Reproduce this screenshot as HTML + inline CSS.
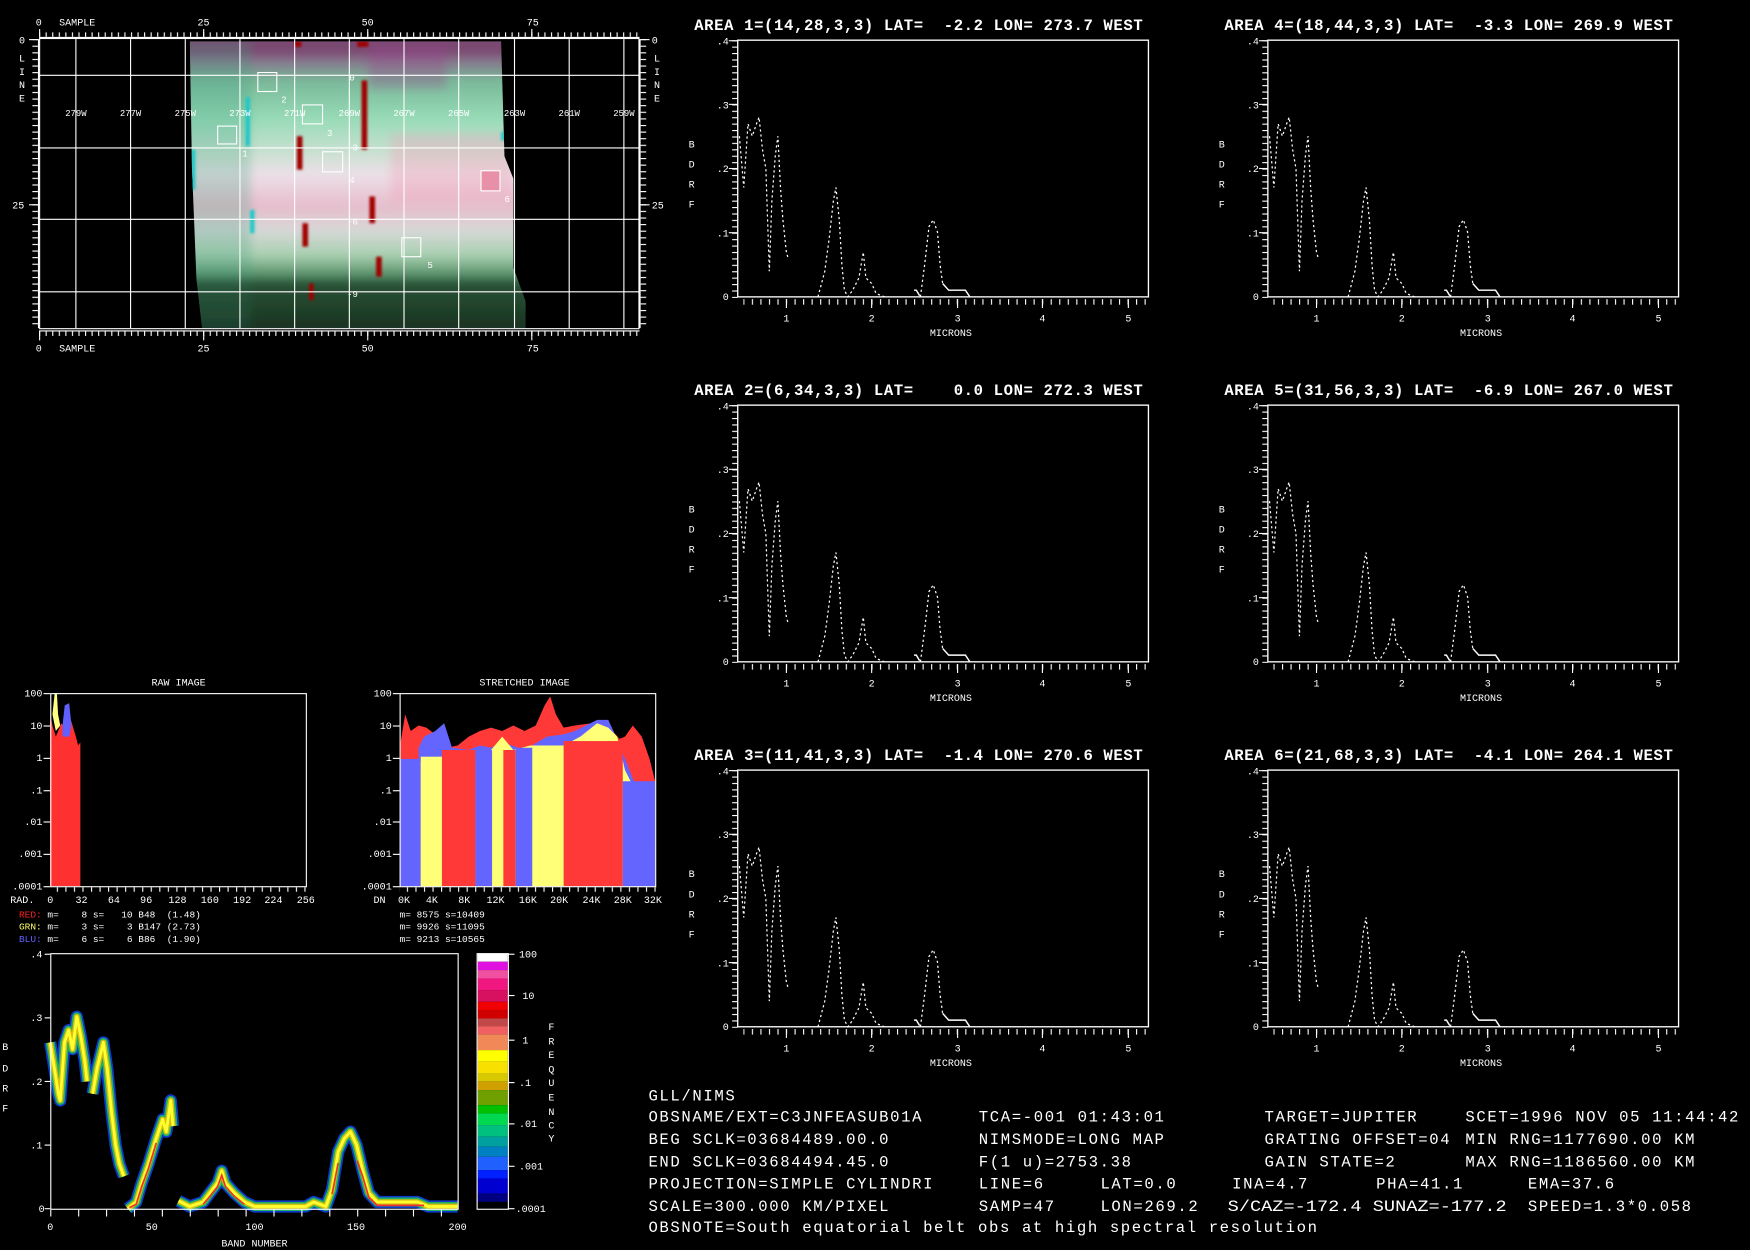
<!DOCTYPE html>
<html><head><meta charset="utf-8"><style>
html,body{margin:0;padding:0;background:#000;width:1750px;height:1250px;overflow:hidden}
svg{display:block}
text{font-family:"Liberation Mono",monospace;fill:#fff}
.s{font-size:9px}
.t{font-size:14px;font-weight:bold;letter-spacing:0.55px}
.i{font-size:14px;letter-spacing:1.45px}
</style></head><body>
<svg width="1750" height="1250" viewBox="0 0 1568 1120" preserveAspectRatio="none" xmlns="http://www.w3.org/2000/svg">
<defs>
<linearGradient id="img" x1="0" y1="0" x2="0" y2="1">
<stop offset="0" stop-color="#6e4a68"/><stop offset=".1" stop-color="#8a6088"/>
<stop offset=".18" stop-color="#78b898"/><stop offset=".3" stop-color="#98dcb8"/>
<stop offset=".4" stop-color="#c8e0d0"/><stop offset=".47" stop-color="#ece0e8"/>
<stop offset=".57" stop-color="#e6bccb"/><stop offset=".64" stop-color="#d8d8d8"/>
<stop offset=".72" stop-color="#a8d0b0"/><stop offset=".8" stop-color="#3c7a52"/>
<stop offset=".9" stop-color="#285838"/><stop offset="1" stop-color="#182020"/>
</linearGradient>
<filter id="bl" x="-5%" y="-5%" width="110%" height="110%"><feGaussianBlur stdDeviation="4"/></filter>
<filter id="bl2"><feGaussianBlur stdDeviation="1.2"/></filter>
<pattern id="tx" width="5.88" height="10" patternUnits="userSpaceOnUse" x="35"><line x1="0.5" y1="0" x2="0.5" y2="10" stroke="#fff" stroke-width="1"/></pattern>
<pattern id="ty" width="10" height="5.92" patternUnits="userSpaceOnUse" y="35"><line x1="0" y1="0.5" x2="10" y2="0.5" stroke="#fff" stroke-width="1"/></pattern>
<pattern id="sx" width="7.65" height="10" patternUnits="userSpaceOnUse" x="5"><line x1="0.5" y1="0" x2="0.5" y2="10" stroke="#fff"/></pattern>
<pattern id="sy" width="10" height="5.75" patternUnits="userSpaceOnUse" y="0"><line x1="0" y1="0.5" x2="10" y2="0.5" stroke="#fff"/></pattern>
<g id="panel">
<rect x="0" y="0" width="368" height="230" fill="none" stroke="#fff" stroke-width="1.2"/>
<rect x="-5" y="0" width="5" height="231" fill="url(#sy)"/>
<rect x="5" y="232" width="363" height="5" fill="url(#sx)"/>
<g stroke="#fff"><line x1="43.6" y1="232" x2="43.6" y2="240"/><line x1="120" y1="232" x2="120" y2="240"/><line x1="197" y1="232" x2="197" y2="240"/><line x1="273" y1="232" x2="273" y2="240"/><line x1="350" y1="232" x2="350" y2="240"/>
<line x1="-8" y1="0.5" x2="0" y2="0.5"/><line x1="-8" y1="57.5" x2="0" y2="57.5"/><line x1="-8" y1="115" x2="0" y2="115"/><line x1="-8" y1="172.5" x2="0" y2="172.5"/></g>
<g class="s" text-anchor="end"><text x="-8" y="4">.4</text><text x="-8" y="61">.3</text><text x="-8" y="118">.2</text><text x="-8" y="176">.1</text><text x="-8" y="233">0</text></g>
<g class="s"><text x="-44" y="96">B</text><text x="-44" y="114">D</text><text x="-44" y="132">R</text><text x="-44" y="150">F</text></g>
<g class="s" text-anchor="middle"><text x="43.6" y="252">1</text><text x="120" y="252">2</text><text x="197" y="252">3</text><text x="273" y="252">4</text><text x="350" y="252">5</text><text x="191" y="265">MICRONS</text></g>
<g fill="none" stroke="#fff" stroke-width="1.1" stroke-dasharray="2 2.5">
<polyline points="1.5,86 5.4,132 9.2,75 13,86 16.8,75 19.1,69 22.2,98 25.2,115 28.3,207 30.6,144 33.7,103 36,86 38.3,132 40.5,161 43.6,190 45.1,195"/>
<polyline points="71.9,230 78,207 81.9,178 85.7,144 88,132 91,161 93.3,201 95.6,224 98.7,230 103,224 108.6,213 112.5,190 114.8,213 120,218 124,227 131.6,230"/>
<polyline points="163.7,230 167.5,201 171.4,167 175.2,161 179,172 181.3,201 183.6,218"/>
</g>
<polyline points="158,224 160,224 163,229" fill="none" stroke="#fff" stroke-width="1.3"/>
<polyline points="183.6,218 189,224 204,224 208,230" fill="none" stroke="#fff" stroke-width="1.3"/>
</g>
<clipPath id="imgclip"><polygon points="170,37 449,37 452,140 460,160 460,240 471,270 471,294 181,294 176,250 172,150"/></clipPath>
</defs>
<rect width="1568" height="1120" fill="#000"/>

<!-- MAP -->
<g clip-path="url(#imgclip)">
<g filter="url(#bl)">
<rect x="150" y="20" width="340" height="290" fill="url(#img)"/>
<rect x="150" y="20" width="340" height="30" fill="#7a4a72"/>
<rect x="165" y="37" width="60" height="258" fill="#40a080" opacity=".25"/>
<rect x="350" y="120" width="110" height="60" fill="#f0a0b8" opacity=".35"/>
<rect x="330" y="40" width="70" height="40" fill="#a04090" opacity=".3"/>
<rect x="165" y="250" width="310" height="45" fill="#101810" opacity=".4"/>
</g>
<g fill="#a00000" filter="url(#bl2)"><rect x="324" y="72" width="5" height="62"/><rect x="266" y="122" width="5" height="30"/><rect x="331" y="176" width="5" height="24"/><rect x="271" y="200" width="5" height="21"/><rect x="337" y="230" width="5" height="18"/><rect x="277" y="254" width="4" height="15"/><rect x="264" y="37" width="6" height="5"/><rect x="320" y="37" width="10" height="5"/></g>
<g fill="#20c8c8" filter="url(#bl2)"><rect x="220" y="87" width="4" height="44"/><rect x="171" y="134" width="4" height="36"/><rect x="224" y="188" width="4" height="21"/><rect x="449" y="118" width="4" height="8"/></g>
</g>
<g stroke="#fff" stroke-width="1" fill="none">
<rect x="35.5" y="34.5" width="537" height="260"/>
<line x1="68" y1="35" x2="68" y2="294"/><line x1="117" y1="35" x2="117" y2="294"/><line x1="166" y1="35" x2="166" y2="294"/><line x1="215" y1="35" x2="215" y2="294"/><line x1="264" y1="35" x2="264" y2="294"/><line x1="313" y1="35" x2="313" y2="294"/><line x1="362" y1="35" x2="362" y2="294"/><line x1="411" y1="35" x2="411" y2="294"/><line x1="461" y1="35" x2="461" y2="294"/><line x1="510" y1="35" x2="510" y2="294"/><line x1="559" y1="35" x2="559" y2="294"/>
<line x1="35" y1="67.5" x2="573" y2="67.5"/><line x1="35" y1="132.5" x2="573" y2="132.5"/><line x1="35" y1="196.5" x2="573" y2="196.5"/><line x1="35" y1="261.5" x2="573" y2="261.5"/>
<line x1="35" y1="33.5" x2="573" y2="33.5"/><line x1="35" y1="296.5" x2="573" y2="296.5"/>
<line x1="34.5" y1="35" x2="34.5" y2="294"/><line x1="573.5" y1="35" x2="573.5" y2="294"/>
<rect x="195" y="113" width="17" height="16"/><rect x="231" y="65" width="17" height="17"/><rect x="271" y="94" width="18" height="17"/><rect x="289" y="136" width="18" height="18"/><rect x="360" y="213" width="17" height="17"/>
<rect x="431" y="153" width="17" height="18" fill="#e890a8"/>
</g>
<rect x="35" y="29" width="538" height="4" fill="url(#tx)"/>
<rect x="35" y="297" width="538" height="4" fill="url(#tx)"/>
<rect x="29" y="35" width="5" height="259" fill="url(#ty)"/>
<rect x="574" y="35" width="5" height="259" fill="url(#ty)"/>
<g stroke="#fff"><line x1="35.5" y1="26" x2="35.5" y2="33"/><line x1="182.5" y1="26" x2="182.5" y2="33"/><line x1="329.5" y1="26" x2="329.5" y2="33"/><line x1="476.5" y1="26" x2="476.5" y2="33"/>
<line x1="35.5" y1="297" x2="35.5" y2="305"/><line x1="182.5" y1="297" x2="182.5" y2="305"/><line x1="329.5" y1="297" x2="329.5" y2="305"/><line x1="476.5" y1="297" x2="476.5" y2="305"/>
<line x1="26" y1="35.5" x2="34" y2="35.5"/><line x1="26" y1="183.5" x2="34" y2="183.5"/><line x1="574" y1="35.5" x2="582" y2="35.5"/><line x1="574" y1="183.5" x2="582" y2="183.5"/></g>
<g class="s">
<text x="32" y="23">0</text><text x="53" y="23">SAMPLE</text><text x="177" y="23">25</text><text x="324" y="23">50</text><text x="472" y="23">75</text>
<text x="32" y="315">0</text><text x="53" y="315">SAMPLE</text><text x="177" y="315">25</text><text x="324" y="315">50</text><text x="472" y="315">75</text>
<text x="17" y="39">0</text><text x="11" y="187">25</text><text x="584" y="39">0</text><text x="584" y="187">25</text>
<text x="17" y="55">L</text><text x="17" y="67">I</text><text x="17" y="79">N</text><text x="17" y="91">E</text>
<text x="586" y="55">L</text><text x="586" y="67">I</text><text x="586" y="79">N</text><text x="586" y="91">E</text>
</g>
<g class="s" style="font-size:8px" text-anchor="middle">
<text x="68" y="104">279W</text><text x="117" y="104">277W</text><text x="166" y="104">275W</text><text x="215" y="104">273W</text><text x="264" y="104">271W</text><text x="313" y="104">269W</text><text x="362" y="104">267W</text><text x="411" y="104">265W</text><text x="461" y="104">263W</text><text x="510" y="104">261W</text><text x="559" y="104">259W</text>
</g>
<g class="s" style="font-size:8px">
<text x="313" y="72">0</text><text x="311" y="135">-3</text><text x="313" y="164">4</text><text x="311" y="201">-6</text><text x="311" y="266">-9</text>
<text x="217" y="140">1</text><text x="252" y="92">2</text><text x="293" y="122">3</text><text x="383" y="240">5</text><text x="452" y="181">6</text>
</g>

<!-- SPECTRA PANELS -->
<g class="t">
<text x="622" y="27">AREA 1=(14,28,3,3) LAT=&#160;&#160;-2.2 LON= 273.7 WEST</text>
<text x="1097" y="27">AREA 4=(18,44,3,3) LAT=&#160;&#160;-3.3 LON= 269.9 WEST</text>
<text x="622" y="354">AREA 2=(6,34,3,3) LAT=&#160;&#160;&#160;&#160;0.0 LON= 272.3 WEST</text>
<text x="1097" y="354">AREA 5=(31,56,3,3) LAT=&#160;&#160;-6.9 LON= 267.0 WEST</text>
<text x="622" y="681">AREA 3=(11,41,3,3) LAT=&#160;&#160;-1.4 LON= 270.6 WEST</text>
<text x="1097" y="681">AREA 6=(21,68,3,3) LAT=&#160;&#160;-4.1 LON= 264.1 WEST</text>
</g>
<use href="#panel" transform="translate(661,36)"/>
<use href="#panel" transform="translate(1136,36)"/>
<use href="#panel" transform="translate(661,363)"/>
<use href="#panel" transform="translate(1136,363)"/>
<use href="#panel" transform="translate(661,690)"/>
<use href="#panel" transform="translate(1136,690)"/>

<!-- RAW HISTOGRAM -->
<text class="s" x="160" y="614" text-anchor="middle">RAW IMAGE</text>
<polygon points="45,794 45,640 47,650 50,660 55,648 58,652 62,640 65,650 68,660 70,668 72,665 72,794" fill="#ff3030"/>
<polygon points="47,640 49,621 51,621 52,640 54,650 50,655" fill="#ffff80"/>
<polygon points="56,650 58,632 62,630 64,650 62,660 56,660" fill="#6060ff"/>
<rect x="45.5" y="621.5" width="229" height="173" fill="none" stroke="#fff"/>
<text class="s" x="470" y="614" text-anchor="middle">STRETCHED IMAGE</text>
<polygon points="359,794 359,665 363,640 368,655 375,650 382,652 390,658 400,670 410,668 420,660 430,655 440,652 450,655 460,650 470,655 480,650 488,632 493,624 498,640 505,652 515,650 530,648 545,650 555,662 560,660 567,650 575,660 582,680 587,700 587,794" fill="#ff3838"/>
<polygon points="375,794 375,670 380,660 390,655 398,648 405,670 420,672 430,668 440,670 450,665 470,672 490,660 505,658 515,655 525,650 535,645 545,645 552,660 560,680 568,700 575,720 580,740 587,760 587,794" fill="#6464ff"/>
<polygon points="362,794 362,680 370,690 380,680 395,678 405,690 420,680 440,672 450,660 460,672 475,668 490,668 505,668 520,660 535,648 545,652 553,660 560,690 570,710 578,730 585,750 587,794" fill="#ffff78"/>
<rect x="358" y="680" width="19" height="114" fill="#6464ff"/>
<rect x="377" y="678" width="19" height="116" fill="#ffff78"/>
<rect x="396" y="672" width="30" height="122" fill="#ff3838"/>
<rect x="426" y="672" width="15" height="122" fill="#6464ff"/>
<rect x="441" y="672" width="10" height="122" fill="#ffff78"/>
<rect x="451" y="672" width="11" height="122" fill="#ff3838"/>
<rect x="462" y="670" width="15" height="124" fill="#6464ff"/>
<rect x="477" y="668" width="28" height="126" fill="#ffff78"/>
<rect x="505" y="664" width="53" height="130" fill="#ff3838"/>
<rect x="558" y="700" width="29" height="94" fill="#6464ff"/>
<rect x="358.5" y="621.5" width="229" height="173" fill="none" stroke="#fff"/>
<g stroke="#fff">
<line x1="39" y1="621.5" x2="45" y2="621.5"/><line x1="39" y1="650.5" x2="45" y2="650.5"/><line x1="39" y1="679.5" x2="45" y2="679.5"/><line x1="39" y1="708.5" x2="45" y2="708.5"/><line x1="39" y1="736.5" x2="45" y2="736.5"/><line x1="39" y1="765.5" x2="45" y2="765.5"/><line x1="39" y1="794.5" x2="45" y2="794.5"/>
<line x1="352" y1="621.5" x2="358" y2="621.5"/><line x1="352" y1="650.5" x2="358" y2="650.5"/><line x1="352" y1="679.5" x2="358" y2="679.5"/><line x1="352" y1="708.5" x2="358" y2="708.5"/><line x1="352" y1="736.5" x2="358" y2="736.5"/><line x1="352" y1="765.5" x2="358" y2="765.5"/><line x1="352" y1="794.5" x2="358" y2="794.5"/>
</g>
<rect x="45" y="795" width="230" height="4" fill="url(#sx)"/>
<rect x="358" y="795" width="230" height="4" fill="url(#sx)"/>
<g class="s" text-anchor="end">
<text x="38" y="624">100</text><text x="38" y="653">10</text><text x="38" y="682">1</text><text x="38" y="711">.1</text><text x="38" y="739">.01</text><text x="38" y="768">.001</text><text x="38" y="797">.0001</text>
<text x="351" y="624">100</text><text x="351" y="653">10</text><text x="351" y="682">1</text><text x="351" y="711">.1</text><text x="351" y="739">.01</text><text x="351" y="768">.001</text><text x="351" y="797">.0001</text>
</g>
<g class="s" text-anchor="middle">
<text x="20" y="809">RAD.</text><text x="45" y="809">0</text><text x="73" y="809">32</text><text x="102" y="809">64</text><text x="131" y="809">96</text><text x="159" y="809">128</text><text x="188" y="809">160</text><text x="217" y="809">192</text><text x="245" y="809">224</text><text x="274" y="809">256</text>
<text x="340" y="809">DN</text><text x="362" y="809">0K</text><text x="387" y="809">4K</text><text x="416" y="809">8K</text><text x="444" y="809">12K</text><text x="473" y="809">16K</text><text x="501" y="809">20K</text><text x="530" y="809">24K</text><text x="558" y="809">28K</text><text x="585" y="809">32K</text>
</g>
<g class="s" style="font-size:8.5px">
<text x="17" y="822"><tspan fill="#ff2020">RED:</tspan> m=&#160;&#160;&#160;&#160;8 s=&#160;&#160;&#160;10 B48&#160;&#160;(1.48)</text>
<text x="17" y="833"><tspan fill="#ffff60">GRN:</tspan> m=&#160;&#160;&#160;&#160;3 s=&#160;&#160;&#160;&#160;3 B147 (2.73)</text>
<text x="17" y="844"><tspan fill="#6060ff">BLU:</tspan> m=&#160;&#160;&#160;&#160;6 s=&#160;&#160;&#160;&#160;6 B86&#160;&#160;(1.90)</text>
<text x="358" y="822">m= 8575 s=10409</text>
<text x="358" y="833">m= 9926 s=11095</text>
<text x="358" y="844">m= 9213 s=10565</text>
</g>

<!-- BDRF DENSITY PLOT -->
<g fill="none" stroke-linejoin="round" stroke-linecap="round">
<g id="sp">
<polyline points="45,934 48.7,957 52.3,980 54,986 57.8,934 61.5,923 65,940 68.8,911 72.5,929 76,951 78,969"/>
<polyline points="83,980 87,957 92.6,934 96,957 100,997 103.6,1026 107,1043 111,1054"/>
<polyline points="114.5,1083 122,1077 127,1060 133,1043 140,1020 145.7,1003 149,1014 153,986 155,1009"/>
<polyline points="160,1076 170,1081 182,1077 188,1069 195,1060 198.7,1049 202,1060 210,1069 219,1077 228,1081 274,1081 281,1077 292,1081 297.5,1066 303,1032 308.5,1020 314,1014 319.5,1026 325,1049 330.5,1069 338,1077 374,1077 383.5,1081 410,1081"/>
</g>
</g>
<use href="#sp" stroke="#1040e0" stroke-width="11" fill="none" stroke-linejoin="round" opacity=".9"/>
<use href="#sp" stroke="#20b060" stroke-width="8" fill="none" stroke-linejoin="round"/>
<use href="#sp" stroke="#d8c010" stroke-width="5" fill="none" stroke-linejoin="round"/>
<use href="#sp" stroke="#ffff30" stroke-width="2.5" fill="none" stroke-linejoin="round"/>
<g fill="none" stroke="#f03030" stroke-width="1.5">
<polyline points="116,1082 122,1079 127,1063 133,1047 140,1024"/>
<polyline points="182,1079 188,1072 195,1063 198.7,1053 202,1063 210,1072 219,1079"/>
<polyline points="297.5,1070 303,1042"/>
<polyline points="320,1040 325,1054 330.5,1073 338,1080 380,1080"/>
</g>
<rect x="45.5" y="854.5" width="365" height="229" fill="none" stroke="#fff"/>
<g stroke="#fff">
<line x1="40" y1="855" x2="45" y2="855"/><line x1="40" y1="912" x2="45" y2="912"/><line x1="40" y1="969" x2="45" y2="969"/><line x1="40" y1="1026" x2="45" y2="1026"/><line x1="40" y1="1083" x2="45" y2="1083"/>
<line x1="45.5" y1="1084" x2="45.5" y2="1090"/><line x1="70.5" y1="1084" x2="70.5" y2="1090"/><line x1="95.5" y1="1084" x2="95.5" y2="1090"/><line x1="120.5" y1="1084" x2="120.5" y2="1090"/><line x1="145.5" y1="1084" x2="145.5" y2="1090"/><line x1="170.5" y1="1084" x2="170.5" y2="1090"/><line x1="195.5" y1="1084" x2="195.5" y2="1090"/><line x1="220.5" y1="1084" x2="220.5" y2="1090"/><line x1="245.5" y1="1084" x2="245.5" y2="1090"/><line x1="270.5" y1="1084" x2="270.5" y2="1090"/><line x1="295.5" y1="1084" x2="295.5" y2="1090"/><line x1="320.5" y1="1084" x2="320.5" y2="1090"/><line x1="345.5" y1="1084" x2="345.5" y2="1090"/><line x1="370.5" y1="1084" x2="370.5" y2="1090"/><line x1="395.5" y1="1084" x2="395.5" y2="1090"/>
</g>
<g class="s" text-anchor="end"><text x="38" y="858">.4</text><text x="38" y="915">.3</text><text x="38" y="972">.2</text><text x="38" y="1029">.1</text><text x="40" y="1086">0</text></g>
<g class="s"><text x="2" y="941">B</text><text x="2" y="960">D</text><text x="2" y="978">R</text><text x="2" y="996">F</text></g>
<g class="s" text-anchor="middle"><text x="45" y="1102">0</text><text x="136" y="1102">50</text><text x="228" y="1102">100</text><text x="319" y="1102">150</text><text x="410" y="1102">200</text><text x="228" y="1117">BAND NUMBER</text></g>

<!-- COLORBAR -->
<g>
<rect x="428" y="854.2" width="27" height="7.5" fill="#ffffff"/>
<rect x="428" y="861.7" width="27" height="7.5" fill="#e010e0"/>
<rect x="428" y="869.2" width="27" height="7.5" fill="#f050a0"/>
<rect x="428" y="876.7" width="27" height="10.4" fill="#f01880"/>
<rect x="428" y="887.1" width="27" height="10.5" fill="#d81060"/>
<rect x="428" y="897.6" width="27" height="7.4" fill="#f00000"/>
<rect x="428" y="905" width="27" height="7.5" fill="#d00000"/>
<rect x="428" y="912.5" width="27" height="6.9" fill="#c04848"/>
<rect x="428" y="919.4" width="27" height="7.4" fill="#f06060"/>
<rect x="428" y="926.8" width="27" height="14.1" fill="#f08858"/>
<rect x="428" y="940.9" width="27" height="10.4" fill="#ffff00"/>
<rect x="428" y="951.3" width="27" height="10.5" fill="#f8e000"/>
<rect x="428" y="961.8" width="27" height="7.4" fill="#d8c800"/>
<rect x="428" y="969.2" width="27" height="7.5" fill="#d0a000"/>
<rect x="428" y="976.7" width="27" height="13.5" fill="#70a000"/>
<rect x="428" y="990.2" width="27" height="7.4" fill="#00c000"/>
<rect x="428" y="997.6" width="27" height="10.5" fill="#00d850"/>
<rect x="428" y="1008.1" width="27" height="10.4" fill="#00c080"/>
<rect x="428" y="1018.5" width="27" height="9" fill="#00a0a0"/>
<rect x="428" y="1027.5" width="27" height="9" fill="#0080c0"/>
<rect x="428" y="1036.5" width="27" height="11.9" fill="#2060ff"/>
<rect x="428" y="1048.4" width="27" height="7.5" fill="#0020ff"/>
<rect x="428" y="1055.9" width="27" height="13.4" fill="#0000d0"/>
<rect x="428" y="1069.3" width="27" height="7.5" fill="#000080"/>
<rect x="427.5" y="854.5" width="28" height="229" fill="none" stroke="#fff"/>
</g>
<g stroke="#fff"><line x1="455" y1="855" x2="461" y2="855"/><line x1="455" y1="892" x2="461" y2="892"/><line x1="455" y1="932" x2="461" y2="932"/><line x1="455" y1="970" x2="461" y2="970"/><line x1="455" y1="1007" x2="461" y2="1007"/><line x1="455" y1="1045" x2="461" y2="1045"/><line x1="455" y1="1083" x2="461" y2="1083"/></g>
<g class="s"><text x="465" y="858">100</text><text x="468" y="895">10</text><text x="468" y="935">1</text><text x="465" y="973">.1</text><text x="465" y="1010">.01</text><text x="465" y="1048">.001</text><text x="462" y="1086">.0001</text></g>
<g class="s" text-anchor="middle"><text x="494" y="923">F</text><text x="494" y="936">R</text><text x="494" y="948">E</text><text x="494" y="961">Q</text><text x="494" y="973">U</text><text x="494" y="986">E</text><text x="494" y="999">N</text><text x="494" y="1011">C</text><text x="494" y="1023">Y</text></g>

<!-- INFO TEXT -->
<g class="i">
<text x="581" y="986">GLL/NIMS</text>
<text x="581" y="1005">OBSNAME/EXT=C3JNFEASUB01A</text><text x="877" y="1005">TCA=-001 01:43:01</text><text x="1133" y="1005">TARGET=JUPITER</text><text x="1313" y="1005">SCET=1996 NOV 05 11:44:42</text>
<text x="581" y="1025">BEG SCLK=03684489.00.0</text><text x="877" y="1025">NIMSMODE=LONG MAP</text><text x="1133" y="1025">GRATING OFFSET=04</text><text x="1313" y="1025">MIN RNG=1177690.00 KM</text>
<text x="581" y="1045">END SCLK=03684494.45.0</text><text x="877" y="1045">F(1 u)=2753.38</text><text x="1133" y="1045">GAIN STATE=2</text><text x="1313" y="1045">MAX RNG=1186560.00 KM</text>
<text x="581" y="1065">PROJECTION=SIMPLE CYLINDRI</text><text x="877" y="1065">LINE=6</text><text x="986" y="1065">LAT=0.0</text><text x="1104" y="1065">INA=4.7</text><text x="1233" y="1065">PHA=41.1</text><text x="1369" y="1065">EMA=37.6</text>
<text x="581" y="1085">SCALE=300.000 KM/PIXEL</text><text x="877" y="1085">SAMP=47</text><text x="986" y="1085">LON=269.2</text><text x="1100" y="1085" textLength="250" lengthAdjust="spacingAndGlyphs" style="letter-spacing:0">S/CAZ=-172.4 SUNAZ=-177.2</text><text x="1369" y="1085">SPEED=1.3*0.058</text>
<text x="581" y="1104">OBSNOTE=South equatorial belt obs at high spectral resolution</text>
</g>
</svg>
</body></html>
